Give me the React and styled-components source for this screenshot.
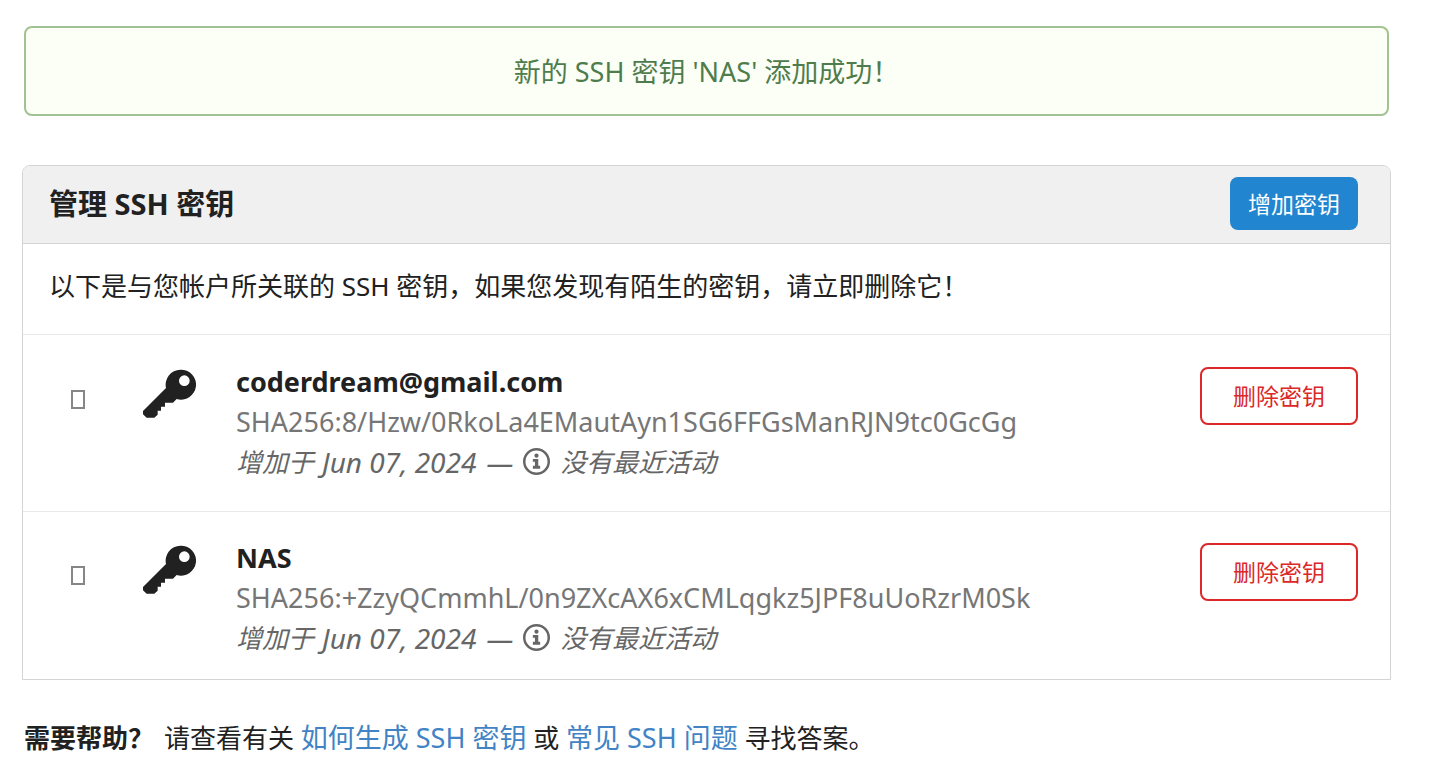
import React from "react";
import styled, { createGlobalStyle } from "styled-components";

const GlobalStyle = createGlobalStyle`
  * { box-sizing: border-box; }
  body {
    margin: 0;
    background: #fff;
    color: #212121;
    font: 26px/40px "Noto Sans", "Noto Sans CJK SC", sans-serif;
  }
`;

const Page = styled.main`
  padding: 26px 50px 18px 22px;
`;

const Flash = styled.div`
  margin: 0 2px 49px;
  padding: 24px 24px 22px;
  border: 2px solid #a3c293;
  border-radius: 8px;
  background: #fcfff5;
  color: #4f7c4d;
  font-size: 27px;
  text-align: center;
`;

const Panel = styled.section`
  border: 1px solid #d4d4d5;
  border-radius: 8px 8px 0 0;
`;

const PanelHeader = styled.header`
  display: flex;
  align-items: center;
  justify-content: space-between;
  height: 78px;
  padding: 0 32px 2px 26px;
  border-bottom: 1px solid #d4d4d5;
  border-radius: 7px 7px 0 0;
  background: #f0f0f0;
`;

const Title = styled.h1`
  margin: 0;
  font-size: 29px;
  line-height: 40px;
`;

const Button = styled.button`
  flex: none;
  border-radius: 8px;
  font: inherit;
  font-size: 23px;
  line-height: 32px;
  cursor: pointer;
`;

const AddButton = styled(Button)`
  height: 53px;
  padding: 0 18px;
  border: 0;
  background: #2185d0;
  color: #fff;
`;

const DeleteButton = styled(Button)`
  height: 58px;
  margin-top: 5px;
  padding: 0 31px;
  border: 2px solid #db2828;
  background: #fff;
  color: #db2828;
`;

const Intro = styled.p`
  margin: 0;
  padding: 22px 26px 28px;
`;

const KeyList = styled.ul`
  margin: 0;
  padding: 0;
  list-style: none;
`;

const KeyRow = styled.li`
  display: flex;
  align-items: flex-start;
  padding: 27px 32px 29px 48px;
  border-top: 1px solid #e9e9ea;

  &:last-child {
    padding-top: 26px;
    padding-bottom: 21px;
  }
`;

const StatusMark = styled.span`
  flex: none;
  width: 14px;
  height: 19px;
  margin: 28px 57px 0 0;
  border: 2px solid #868686;
`;

const KeyIcon = styled.svg`
  flex: none;
  width: 54px;
  height: 50px;
  margin: 7px 40px 0 0;
  fill: #212121;
`;

const KeyInfo = styled.div`
  flex: 1;
  min-width: 0;
`;

const KeyName = styled.strong`
  display: block;
  font-size: 27px;
`;

const Fingerprint = styled.div`
  color: #767676;
  font-size: 27px;
  overflow-wrap: anywhere;
`;

const Activity = styled.div`
  display: flex;
  align-items: center;
  height: 40px;
  color: #666;
  font-style: italic;
`;

const AddedOn = styled.time`
  margin: 0 10px 0 8px;
  font-size: 28px;
`;

const Dash = styled.span`
  font-size: 28px;
`;

const InfoIcon = styled.svg`
  width: 27px;
  height: 27px;
  margin: 0 10px 2px;
`;

const Help = styled.p`
  margin: 38px 0 0;
  padding: 0 2px;
`;

const Question = styled.strong`
  margin-right: 10px;
`;

const Link = styled.a`
  color: #4183c4;
  font-size: 27px;
  text-decoration: none;
`;

const keys = [
  { name: "coderdream@gmail.com", hash: "SHA256:8/Hzw/0RkoLa4EMautAyn1SG6FFGsManRJN9tc0GcGg" },
  { name: "NAS", hash: "SHA256:+ZzyQCmmhL/0n9ZXcAX6xCMLqgkz5JPF8uUoRzrM0Sk" },
];

function KeyItem({ name, hash }) {
  return (
    <KeyRow>
      <StatusMark />
      <KeyIcon viewBox="0 0 162 150" aria-hidden="true">
        <path
          fillRule="evenodd"
          d="M115 2a45 45 0 1 1-11 88L93 101H69v12H57v12H47v12l-10 9H14L3 136v-10l69-69A45 45 0 0 1 115 2zM127 19a16 16 0 1 0 0 32a16 16 0 0 0 0-32z"
        />
      </KeyIcon>
      <KeyInfo>
        <KeyName>{name}</KeyName>
        <Fingerprint>{hash}</Fingerprint>
        <Activity>
          <span>增加于</span>
          <AddedOn dateTime="2024-06-07">Jun 07, 2024</AddedOn>
          <Dash>—</Dash>
          <InfoIcon viewBox="0 0 26 26" aria-hidden="true">
            <circle cx="13" cy="13" r="11.8" fill="none" stroke="#666" strokeWidth="2.4" />
            <circle cx="13" cy="7.4" r="2" fill="#666" />
            <path d="M9.5 10.6h5.2v6.6h1.8v2.7H9.5v-2.7h2v-3.9h-2z" fill="#666" />
          </InfoIcon>
          <span>没有最近活动</span>
        </Activity>
      </KeyInfo>
      <DeleteButton type="button">删除密钥</DeleteButton>
    </KeyRow>
  );
}

export default function App() {
  return (
    <>
      <GlobalStyle />
      <Page lang="zh-CN">
        <Flash role="status">新的 SSH 密钥 'NAS' 添加成功！</Flash>
        <Panel>
          <PanelHeader>
            <Title>管理 SSH 密钥</Title>
            <AddButton type="button">增加密钥</AddButton>
          </PanelHeader>
          <Intro>以下是与您帐户所关联的 SSH 密钥，如果您发现有陌生的密钥，请立即删除它！</Intro>
          <KeyList>
            {keys.map((key) => (
              <KeyItem key={key.name} {...key} />
            ))}
          </KeyList>
        </Panel>
        <Help>
          <Question>需要帮助？</Question>
          请查看有关 <Link href="#generate">如何生成 SSH 密钥</Link> 或{" "}
          <Link href="#faq">常见 SSH 问题</Link> 寻找答案。
        </Help>
      </Page>
    </>
  );
}
